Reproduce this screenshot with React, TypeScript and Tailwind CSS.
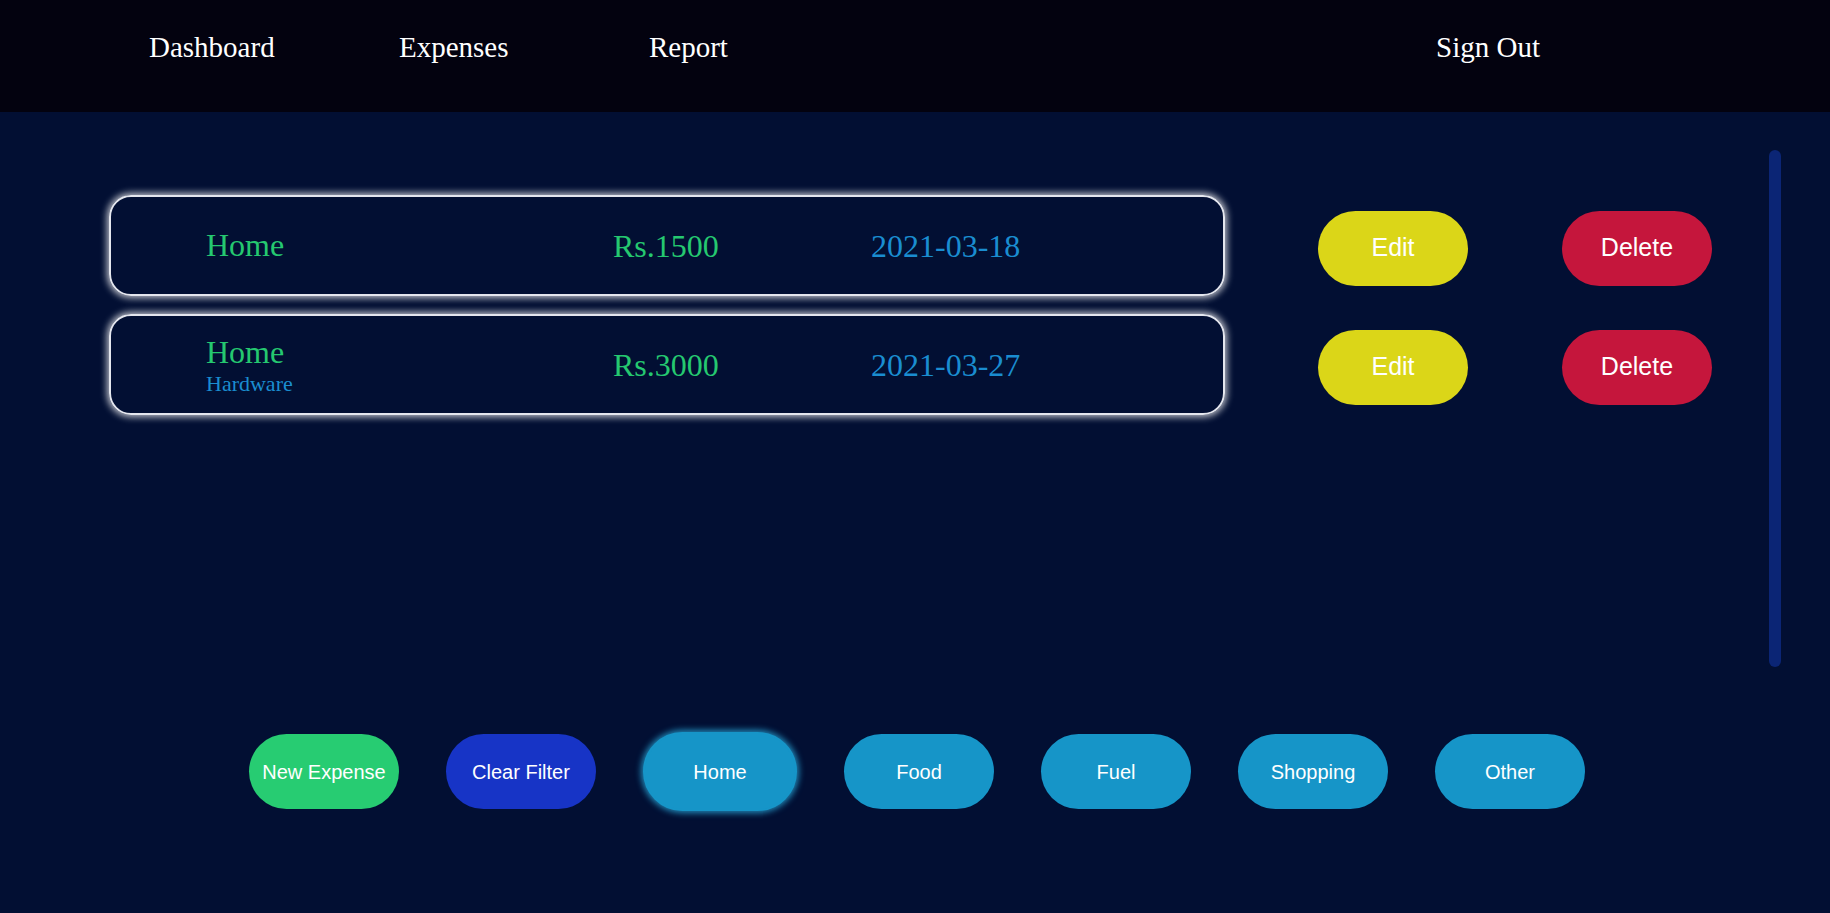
import React from "react";

const serif = "font-['Liberation_Serif','Times_New_Roman',serif]";
const sans = "font-['Liberation_Sans',Arial,sans-serif]";

type Row = { cat: string; sub?: string; amount: string; date: string };

const rows: Row[] = [
  { cat: "Home", amount: "Rs.1500", date: "2021-03-18" },
  { cat: "Home", sub: "Hardware", amount: "Rs.3000", date: "2021-03-27" },
];

function ExpenseRow({ r }: { r: Row }) {
  return (
    <div className="flex items-center">
      <div className="w-[1116px] h-[101px] rounded-[22px] border-2 border-[#e4e6ee] shadow-[0_0_7px_2px_rgba(255,255,255,0.75)] flex items-center pl-[95px]">
        <div className="w-[407px] flex flex-col">
          <span className={`${serif} text-[32px] leading-[37px] text-[#25c870]`}>{r.cat}</span>
          {r.sub && (
            <span className={`${serif} text-[22px] leading-[25px] text-[#1a8dd0]`}>{r.sub}</span>
          )}
        </div>
        <div className={`w-[258px] ${serif} text-[32px] text-[#25c870]`}>{r.amount}</div>
        <div className={`${serif} text-[32px] text-[#1a8dd0]`}>{r.date}</div>
      </div>
      <button
        className={`ml-[93px] mt-[5px] w-[150px] h-[75px] rounded-full bg-[#dbd618] text-white ${sans} text-[25px]`}
      >
        Edit
      </button>
      <button
        className={`ml-[94px] mt-[5px] w-[150px] h-[75px] rounded-full bg-[#c5163c] text-white ${sans} text-[25px]`}
      >
        Delete
      </button>
    </div>
  );
}

export default function App() {
  return (
    <div className="w-[1830px] h-[913px] bg-[#020f33] flex flex-col overflow-hidden">
      <nav className={`h-[112px] bg-[#03020f] flex items-start pt-[26px] pl-[149px] ${serif} text-[29px] text-white`}>
        <a className="w-[250px]">Dashboard</a>
        <a className="w-[250px]">Expenses</a>
        <a className="w-[250px]">Report</a>
        <a className="ml-[537px]">Sign Out</a>
      </nav>

      <div className="mt-[38px] h-[517px] flex">
        <div className="flex-1 pt-[45px] pl-[109px] flex flex-col gap-[18px]">
          {rows.map((r, i) => (
            <ExpenseRow key={i} r={r} />
          ))}
        </div>
        <div className="w-[12px] h-[517px] rounded-full bg-[#0b2575] mr-[49px]" />
      </div>

      <div className={`mt-[65px] pl-[4px] flex items-center justify-center gap-[47px] ${sans} text-[20px] text-white`}>
        <button className="w-[150px] h-[75px] rounded-full bg-[#27cc72]">New Expense</button>
        <button className="w-[150px] h-[75px] rounded-full bg-[#1734c6]">Clear Filter</button>
        <button className="w-[154px] h-[79px] rounded-full bg-[#1695c8] border-2 border-[#1695c8] shadow-[0_0_6px_2px_rgba(40,170,220,0.8)]">
          Home
        </button>
        <button className="w-[150px] h-[75px] rounded-full bg-[#1695c8]">Food</button>
        <button className="w-[150px] h-[75px] rounded-full bg-[#1695c8]">Fuel</button>
        <button className="w-[150px] h-[75px] rounded-full bg-[#1695c8]">Shopping</button>
        <button className="w-[150px] h-[75px] rounded-full bg-[#1695c8]">Other</button>
      </div>
    </div>
  );
}
